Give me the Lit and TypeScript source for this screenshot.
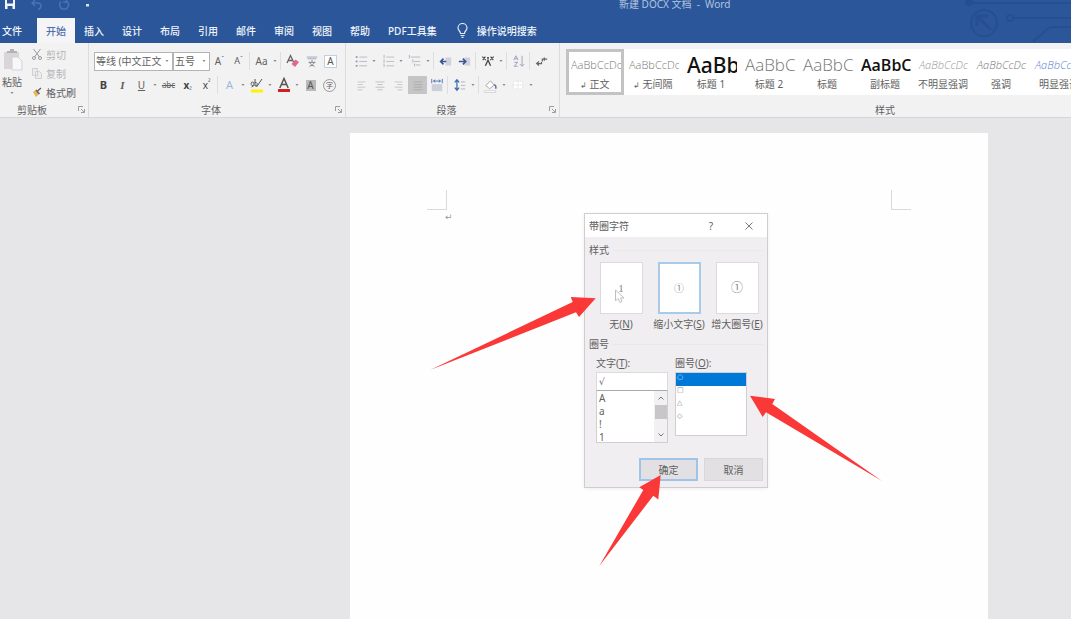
import { LitElement, html, svg, css, nothing, TemplateResult } from "lit";
import { customElement } from "lit/decorators.js";
import { classMap } from "lit/directives/class-map.js";

const lines = (rows: [number, number, number][], color: string) =>
  svg`${rows.map(([x, y, w]) => svg`<path d="M${x} ${y}h${w}" stroke=${color} fill="none"></path>`)}`;

const icon = (body: unknown, size = 16) =>
  html`<svg width=${size} height=${size} viewBox="0 0 16 16" aria-hidden="true">${body}</svg>`;

const caret = html`<svg class="caret" width="4" height="3" viewBox="0 0 4 3" aria-hidden="true"><path d="M.500 0h3L2 2z" fill="#888"></path></svg>`;

type Tool = { k: "tool" | "drop" | "sep"; label?: string; body?: unknown; on?: boolean };
const t = (label: string, body: unknown, on = false): Tool => ({ k: "tool", label, body, on });
const drop = (label: string): Tool => ({ k: "drop", label });
const sep: Tool = { k: "sep" };

const fontRowOne: Tool[] = [
  t("增大字号", html`<span class="g10">A</span><span class="tick">ˆ</span>`),
  t("减小字号", html`<span class="g9">A</span><span class="tick">ˇ</span>`),
  sep,
  t("更改大小写", html`<span class="g10">Aa</span>`),
  drop("更改大小写选项"),
  sep,
  t("清除所有格式", icon(svg`<path d="M2 10L5.500 2.500L9 10M3.300 7.500h4.500" stroke="#666" stroke-width="1.300" fill="none"></path><path d="M6.500 11l4-4.500 3.500 2.500-4 5z" fill="#e0688a"></path>`)),
  t("拼音指南", icon(svg`<path d="M2 3.500h12M3 5.500h10" stroke="#96a0b8"></path><path d="M8 7v2M4 9.500h8M10.500 10c-1 2-3 3.500-5.500 4M5.500 10c1 2 3 3.500 5.500 4" stroke="#777" fill="none"></path>`, 14)),
  t("字符边框", html`<span class="boxed">A</span>`),
];

const fontRowTwo: Tool[] = [
  t("加粗", html`<b class="g11">B</b>`),
  t("倾斜", html`<i class="g11 serif">I</i>`),
  t("下划线", html`<u class="g10">U</u>`),
  drop("下划线选项"),
  t("删除线", html`<s class="g8">abc</s>`),
  t("下标", html`<b class="g10">x</b><span class="low">₂</span>`),
  t("上标", html`<span class="g10 dark">x</span><span class="high">²</span>`),
  sep,
  t("文本效果", html`<span class="glow">A</span>`),
  drop("文本效果选项"),
  t("突出显示", icon(svg`<path d="M2 12.500h12v3H2z" fill="#fff200"></path><path d="M2.500 10c3-1 3-5 1-5s-2 4 1 4M6 2v7c3 0 3-4 0-3.500M7.500 10l5.500-8" stroke="#555" fill="none"></path>`)),
  drop("突出显示选项"),
  t("字体颜色", icon(svg`<path d="M2 12h12v3H2z" fill="#d21f1f"></path><path d="M3.800 11L8 1.500L12.200 11M5.300 7.500h5.400" stroke="#555" stroke-width="1.500" fill="none"></path>`)),
  drop("字体颜色选项"),
  t("字符底纹", html`<span class="shaded">A</span>`),
  t("带圈字符", html`<span class="ringed">字</span>`),
];

const bullets = (c: string) => svg`${lines([[6, 3.5, 9], [6, 8.5, 9], [6, 13.5, 9]], "#b5b5ba")}${[3.5, 8.5, 13.5].map((y) => svg`<path d=${`M2 ${y}h2`} stroke=${c} stroke-width="2"></path>`)}`;

const paraRowOne: Tool[] = [
  t("项目符号", icon(bullets("#8c93b5"), 14)),
  drop("项目符号选项"),
  t("编号", icon(svg`${lines([[6, 3.5, 9], [6, 8.5, 9], [6, 13.5, 9]], "#b8b8bc")}<path d="M3.500 1v14" stroke="#aab0c6" stroke-dasharray="4 1"></path>`, 14)),
  drop("编号选项"),
  t("多级列表", icon(svg`${lines([[3, 3.5, 11], [7, 8.5, 7], [9, 12.5, 5]], "#b2b2b8")}<path d="M1.500 1v4M5.500 6v4M7.500 11v3" stroke="#a3aac3"></path>`, 14)),
  drop("多级列表选项"),
  sep,
  t("减少缩进量", icon(svg`<path d="M8 3h7v10H8z" fill="#cfd2dc"></path><path d="M2 8h7M5.500 4.500L2 8l3.500 3.500" stroke="#35568f" stroke-width="2" fill="none"></path>`, 13)),
  t("增加缩进量", icon(svg`<path d="M8 3h7v10H8z" fill="#cfd2dc"></path><path d="M1 8h8M6 4.500L9.500 8 6 11.500" stroke="#35568f" stroke-width="2" fill="none"></path>`, 13)),
  sep,
  t("中文版式", icon(svg`<path d="M5 13.500L8 7l3 6.500" stroke="#4a4a4a" stroke-width="1.500" fill="none"></path><path d="M1.500 3l4 4M14.500 3l-4 4M2 7l3-4M14 7l-3-4" stroke="#4a4a4a" stroke-width="1.300"></path><path d="M7 3.500h2v2H7z" fill="#4a4a4a"></path>`, 14)),
  drop("中文版式选项"),
  sep,
  t("排序", icon(svg`<path d="M2 7l2.500-5L7 7M3 5.500h3M2.500 9.500h4L2.500 14h4" stroke="#9297bd" fill="none"></path><path d="M11.500 2v12M9 11.500l2.500 2.500 2.500-2.500" stroke="#9a9aa2" fill="none"></path>`, 14)),
  sep,
  t("显示编辑标记", icon(svg`<path d="M15 5H9v3M11.500 3v4M8 8.500v2H2M5 8L2 10.500 5 13" stroke="#666" stroke-width="1.500" fill="none"></path>`, 13)),
];

const paraRowTwo: Tool[] = [
  t("左对齐", icon(lines([[4, 4.5, 9], [4, 7.5, 6], [4, 10.5, 9], [4, 13.5, 6]], "#c4c4c7"), 14)),
  t("居中", icon(lines([[3, 4.5, 10], [5, 7.5, 6], [3, 10.5, 10], [5, 13.5, 6]], "#bcbcbf"), 14)),
  t("右对齐", icon(lines([[3, 4.5, 9], [6, 7.5, 6], [3, 10.5, 9], [6, 13.5, 6]], "#c4c4c7"), 14)),
  t("两端对齐", icon(lines([[3, 4.5, 10], [3, 7.5, 10], [3, 10.5, 10], [3, 13.5, 10]], "#acabac"), 14), true),
  t("分散对齐", icon(svg`<path d="M2 7h12v8H2z" fill="#cdd0d8"></path><path d="M2 1v5M14 1v5M4 3.500h8M6 2L4 3.500 6 5M10 2l2 1.500L10 5" stroke="#3a6bb0" fill="none"></path>`, 14)),
  sep,
  t("行距", icon(svg`<path d="M4.500 2v12M2 5l2.500-3L7 5M2 11l2.500 3L7 11" stroke="#3a6bb0" stroke-width="1.400" fill="none"></path>${lines([[9, 4.5, 5], [9, 8.5, 5], [9, 12.5, 5]], "#aeb0b6")}`, 14)),
  drop("行距选项"),
  sep,
  t("底纹", icon(svg`<path d="M3 8l5-5 4 4.500-5 4z" fill="#fff" stroke="#a2a2a6"></path><path d="M12 7c2 1 2 3 1.500 4.500" stroke="#62739c" stroke-width="1.500" fill="none"></path><path d="M1.500 13.500h12v2h-12z" fill="#fff" stroke="#d3d3d6"></path>`, 15)),
  drop("底纹选项"),
  t("边框", icon(svg`<path d="M2 3h12v10H2z" fill="#fff"></path><path d="M2.500 3.500h11v9h-11zM8 3v10M2 8h12" stroke="#d0d0d5" fill="none" stroke-dasharray="1 1"></path>`, 14)),
  drop("边框选项"),
];

const styleTiles: { sample: string; look: string; name: string; mark?: boolean }[] = [
  { sample: "AaBbCcDc", look: "body", name: "正文", mark: true },
  { sample: "AaBbCcDc", look: "body", name: "无间隔", mark: true },
  { sample: "AaBb", look: "h1", name: "标题 1" },
  { sample: "AaBbC", look: "h2", name: "标题 2" },
  { sample: "AaBbC", look: "h2", name: "标题" },
  { sample: "AaBbC", look: "sub", name: "副标题" },
  { sample: "AaBbCcDc", look: "em soft", name: "不明显强调" },
  { sample: "AaBbCcDc", look: "em", name: "强调" },
  { sample: "AaBbCcDc", look: "em blue", name: "明显强调" },
];

const fontStack = css`"Noto Sans", "Noto Sans CJK SC", sans-serif`;

@customElement("word-ribbon")
class WordRibbon extends LitElement {
  static styles = css`
    :host { display: block; font: 10px/14px ${fontStack}; color: #606060; }
    * { box-sizing: border-box; }
    button, select { font: inherit; color: inherit; border: 0; padding: 0; margin: 0; background: none; appearance: none; }
    button { display: flex; align-items: center; justify-content: center; }
    .title { display: grid; grid-template-columns: 619px 1fr; height: 18px; color: #b3c3df; position: relative; }
    .quick { display: flex; padding-left: 4px; gap: 15px; height: 11px; }
    .doc { font-size: 10px; line-height: 8px; white-space: nowrap; }
    .head { background: #2b579a; position: relative; }
    .circuit { position: absolute; right: 0; top: 0; }
    .tabs { display: flex; height: 25px; position: relative; color: #f1f5fb; }
    .tab { display: flex; align-items: center; padding: 0 9px; font-size: 10px; color: inherit; text-decoration: none; font-weight: 500; white-space: nowrap; }
    .tab:first-child { padding: 0 15px 0 2px; }
    .tab.on { background: #f5f4f6; color: #5070ad; }
    .tell { gap: 9px; margin-left: 2px; }
    .ribbon { display: flex; background: #f3f2f3; border-bottom: 1px solid #d6d5d7; overflow: hidden; }
    .group { display: flex; flex-direction: column; flex: none; position: relative; border-right: 1px solid #dcdbdd; }
    .group.clip { width: 89px; }
    .group.font { width: 257px; }
    .group.para { width: 214px; }
    .group.styles { border: 0; }
    .body { height: 59px; padding: 6px 0 0 5px; }
    .clip .body { display: flex; gap: 8px; padding: 2px 0 0 0; }
    .clip .foot span { padding-right: 12px; }
    .foot { display: flex; align-items: center; height: 15px; padding-right: 2px; }
    .foot span { flex: 1; text-align: center; }
    .launch { width: 10px; height: 10px; }
    .row { display: flex; align-items: center; height: 24px; }
    .tool { width: 19px; height: 18px; flex: none; }
    .tool.on { background: #c6c5c6; }
    .drop { width: 8px; height: 18px; flex: none; }
    .sep { width: 1px; height: 18px; background: #dedde0; margin: 0 2px 0 1px; }
    .combo { display: flex; align-items: center; height: 19px; background: #fff; border: 1px solid #b4b4b6; padding-right: 3px; }
    .combo select { flex: 1; min-width: 0; height: 17px; padding-left: 1px; white-space: nowrap; overflow: hidden; }
    .wide { width: 79px; }
    .narrow { width: 37px; }
    .paste { display: flex; flex-direction: column; width: 24px; padding-top: 3px; gap: 3px; justify-content: flex-start; }
    .stack { display: flex; flex-direction: column; }
    .mini { height: 19px; gap: 4px; justify-content: flex-start; }
    .mini.off { color: #b3b2b5; }
    .g8 { font-size: 8px; }
    .g9 { font-size: 9px; }
    .g10 { font-size: 10px; }
    .g11 { font-size: 11px; }
    b, .dark { color: #444; }
    .serif { font-family: "Liberation Serif", serif; font-weight: bold; }
    .tick, .low, .high { font-size: 7px; }
    .tick, .high { align-self: flex-start; }
    .low { align-self: flex-end; }
    .boxed { border: 1px solid #c5cde0; background: #fff; width: 13px; line-height: 11px; color: #555; }
    .shaded { background: #b9b9b9; width: 10px; line-height: 11px; color: #555; }
    .ringed { border: 1px solid #999; border-radius: 50%; width: 13px; height: 13px; font-size: 7px; line-height: 11px; }
    .glow { color: #9db8de; font-size: 11px; }
    .gallery { display: flex; background: #fff; height: 46px; }
    .styles .body { padding: 6px 124px 0 6px; }
    .tile { width: 58px; height: 46px; flex: none; flex-direction: column; border: 3px solid transparent; }
    .tile.on { border-color: #c3c3c3; }
    .sample { width: 52px; height: 24px; line-height: 24px; overflow: hidden; white-space: nowrap; text-align: left; padding-left: 2px; font-family: "Open Sans", sans-serif; font-weight: 300; color: #777; }
    .name { height: 14px; white-space: nowrap; }
    .body-s, .em { font-size: 11px; }
    .h1 { font-family: "Noto Sans", sans-serif; font-size: 21px; color: #111; font-weight: 500; }
    .h2 { font-size: 17px; }
    .sub { font-size: 16px; color: #111; font-weight: 600; }
    .em { font-style: italic; }
    .soft { color: #999; }
    .blue { color: #5a83cc; }
  `;

  private row(tools: Tool[], before: unknown = nothing) {
    return html`<div class="row">${before}${tools.map((x) =>
      x.k === "sep"
        ? html`<span class="sep"></span>`
        : x.k === "drop"
          ? html`<button class="drop" aria-label=${x.label}>${caret}</button>`
          : html`<button class=${classMap({ tool: true, on: !!x.on })} aria-label=${x.label}>${x.body}</button>`)}</div>`;
  }

  private group(kind: string, label: string, body: TemplateResult, launcher = true) {
    return html`<section class="group ${kind}">
      <div class="body">${body}</div>
      <div class="foot"><span>${label}</span>${launcher
        ? html`<button class="launch" aria-label="${label}设置"><svg width="7" height="7" viewBox="0 0 7 7"><path d="M.500 5V.500H5M3 3l3 3M6.500 3v3.500H3" stroke="#9d9da0" fill="none"></path></svg></button>`
        : nothing}</div>
    </section>`;
  }

  render() {
    const tabs = ["文件", "开始", "插入", "设计", "布局", "引用", "邮件", "审阅", "视图", "帮助", "PDF工具集"];
    return html`
      <header class="head">
        <svg class="circuit" width="110" height="43" viewBox="0 0 110 43" fill="none" stroke="#264f90" stroke-width="2" aria-hidden="true">
          <circle cx="8" cy="2" r="3" fill="#264f90"></circle><path d="M10 3h100M52 18h58M72 42l12-11q4-4 10-4h16"></path>
          <circle cx="49" cy="18" r="3"></circle><circle cx="23" cy="23" r="13"></circle><path d="M30 30L17 17M16 26V16h11" stroke-width="3"></path>
        </svg>
        <div class="title">
          <div class="quick">
            <button aria-label="保存"><svg width="12" height="11" viewBox="0 0 12 11"><path d="M1 0h10v9H1z" fill="#f2f6fc"></path><path d="M3 0h6v3.500H3zM3.500 6h5v3h-5z" fill="#2b579a"></path></svg></button>
            <button aria-label="撤消"><svg width="12" height="11" viewBox="0 0 12 11"><path d="M4 0L1 3l3 3M1 3h5q4 0 4 3t-3 3" stroke="#4a73b1" stroke-width="1.500" fill="none"></path></svg></button>
            <button aria-label="恢复"><svg width="12" height="11" viewBox="0 0 12 11"><path d="M8.500 1A4.500 4.500 0 1 1 3 1.500M8.500-2v4H5" stroke="#4a73b1" stroke-width="1.500" fill="none"></path></svg></button>
            <button aria-label="自定义快速访问工具栏"><svg width="6" height="11" viewBox="0 0 6 11"><path d="M1 4h3v2.500H1z" fill="#d7e2f3"></path></svg></button>
          </div>
          <div class="doc">新建 DOCX 文档 &nbsp;-&nbsp; Word</div>
        </div>
        <nav class="tabs">
          ${tabs.map((x, i) => html`<a href="#" class=${classMap({ tab: true, on: i === 1 })}>${x}</a>`)}
          <a href="#" class="tab tell"><svg width="11" height="15" viewBox="0 0 11 15" fill="none" stroke="#dfe9f7" stroke-width="1.200"><path d="M3.500 10.500C3.500 8 1 7.500 1 5a4.500 4.500 0 0 1 9 0c0 2.500-2.500 3-2.500 5.500zM3.500 12.500h4M4.500 14.300h2"></path></svg>操作说明搜索</a>
        </nav>
      </header>
      <div class="ribbon">
        ${this.group("clip", "剪贴板", html`
          <button class="paste"><svg width="22" height="24" viewBox="0 0 22 24"><path d="M3 4h15v17H3z" fill="#d9d6da"></path><path d="M6 5V3h3V1h4v2h3v2z" fill="#b4b2b6"></path><path d="M11 9h6l4 4v9H11z" fill="#f8f7f9" stroke="#d3d1d5"></path></svg><span>粘贴</span>${caret}</button>
          <div class="stack">
            <button class="mini off"><svg width="10" height="11" viewBox="0 0 10 11"><path d="M1.500 0L7.500 8M8.500 0L2.500 8" stroke="#9a9a9e" fill="none"></path><circle cx="2" cy="9" r="1.500" fill="none" stroke="#9a9a9e"></circle><circle cx="8" cy="9" r="1.500" fill="none" stroke="#9a9a9e"></circle></svg>剪切</button>
            <button class="mini off"><svg width="10" height="11" viewBox="0 0 10 11"><path d="M.500.500h5v7h-5zM3.500 3.500h4l2 2v5h-6z" fill="#ececee" stroke="#d0cfd2"></path></svg>复制</button>
            <button class="mini"><svg width="10" height="11" viewBox="0 0 10 11"><path d="M1 5l3-2 3 4-3 3z" fill="#e9b44c"></path><path d="M5 4.500L9 1M4 3l3.500 4" stroke="#66636a" stroke-width="1.500"></path></svg>格式刷</button>
          </div>`)}
        ${this.group("font", "字体", html`
          ${this.row(fontRowOne, html`
            <label class="combo wide"><select aria-label="字体"><option>等线 (中文正文</option></select>${caret}</label>
            <label class="combo narrow"><select aria-label="字号"><option>五号</option></select>${caret}</label>`)}
          ${this.row(fontRowTwo)}`)}
        ${this.group("para", "段落", html`${this.row(paraRowOne)}${this.row(paraRowTwo)}`)}
        ${this.group("styles", "样式", html`<div class="gallery">${styleTiles.map((s, i) => html`
          <button class=${classMap({ tile: true, on: i === 0 })}>
            <span class="sample ${s.look === "body" ? "body-s" : s.look}">${s.sample}</span>
            <span class="name">${s.mark ? html`<small class="g8">↲ </small>` : nothing}${s.name}</span>
          </button>`)}</div>`, false)}
      </div>`;
  }
}

@customElement("enclose-dialog")
class EncloseDialog extends LitElement {
  static styles = css`
    :host { display: block; width: 184px; border: 1px solid #cfcdd0; background: #f0eef0; font: 10px/14px ${fontStack}; color: #606060; box-sizing: border-box; box-shadow: 0 1px 4px #0001; }
    * { box-sizing: border-box; }
    button, input, select { font: inherit; color: inherit; margin: 0; padding: 0; border: 0; border-radius: 0; background: none; outline: 0; }
    .bar { display: flex; align-items: center; height: 23px; padding: 0 10px 0 4px; background: #fff; }
    .bar span { flex: 1; }
    .bar button { width: 16px; height: 16px; display: grid; place-items: center; }
    .bar button + button { margin-left: 22px; }
    .legend { display: flex; align-items: center; gap: 4px; margin: 6px 4px 0; height: 14px; }
    .legend::after { content: ""; flex: 1; height: 1px; background: #e9e7e9; }
    .choices { display: flex; padding: 5px 0 0 7px; }
    .choice { width: 58px; display: flex; flex-direction: column; align-items: center; gap: 3px; white-space: nowrap; }
    .choice input { appearance: none; width: 0; height: 0; position: absolute; }
    .card { width: 43px; height: 52px; background: #fff; border: 1px solid #dcdadd; display: grid; place-items: center; color: #888; position: relative; }
    .choice input:checked + .card { border: 2px solid #a9cbea; }
    .one { font: 11px/14px "Liberation Serif", serif; }
    .small { font-size: 10px; }
    .large { font-size: 12px; }
    .pointer { position: absolute; left: 13px; top: 26px; }
    .fields { display: flex; gap: 7px; padding: 5px 0 0 11px; }
    .field { width: 72px; display: flex; flex-direction: column; }
    .field label { margin-bottom: 2px; }
    .entry { width: 100%; height: 19px; padding-left: 2px; background: #fff; border: 1px solid #dcdadd; border-bottom-color: #aaa; font-family: "DejaVu Sans", sans-serif; font-size: 9px; }
    .list { display: flex; height: 52px; background: #fff; border: 1px solid #d0ced1; border-top: 0; }
    .list.tall { height: 64px; border: 1px solid #d0ced1; }
    select { flex: 1; min-width: 0; height: 100%; overflow: hidden; scrollbar-width: none; }
    option { height: 13px; min-height: 13px; line-height: 13px; padding: 0 0 0 2px; }
    .tall option { padding-left: 1px; font-family: "DejaVu Sans", sans-serif; font-size: 7px; color: #888; }
    .tall option:checked { background: #0078d7 linear-gradient(#0078d7, #0078d7); color: #cfe6fa; }
    .scroll { width: 13px; display: flex; flex-direction: column; align-items: center; background: #f1f0f2; padding: 5px 0 4px; }
    .thumb { width: 12px; height: 14px; background: #c8c6c9; margin: 5px 0 14px; }
    .actions { display: flex; justify-content: flex-end; gap: 6px; padding: 15px 4px 6px; }
    .actions button { width: 59px; height: 23px; background: #e2e0e3; border: 1px solid #d8d6d9; }
    .actions .ok { border: 2px solid #9fc4e8; }
  `;

  render() {
    const chev = (d: string) => html`<svg width="6" height="4" viewBox="0 0 6 4"><path d=${d} fill="none" stroke="#777"></path></svg>`;
    return html`
      <div class="bar"><span>带圈字符</span><button aria-label="帮助">?</button>
        <button aria-label="关闭"><svg width="8" height="8" viewBox="0 0 8 8"><path d="M.500.500l7 7M7.500.500l-7 7" stroke="#777"></path></svg></button></div>
      <div class="legend">样式</div>
      <div class="choices">
        <label class="choice"><input type="radio" name="mode"><span class="card"><span class="one">1</span>
          <svg class="pointer" width="12" height="15" viewBox="0 0 12 15"><path d="M1.500 1v11l2.500-2.500L6 13.500l2-1L6.500 9H10z" fill="#fff" stroke="#c0bec1"></path></svg></span><span>无(<u>N</u>)</span></label>
        <label class="choice"><input type="radio" name="mode" checked><span class="card"><span class="small">①</span></span><span>缩小文字(<u>S</u>)</span></label>
        <label class="choice"><input type="radio" name="mode"><span class="card"><span class="large">①</span></span><span>增大圈号(<u>E</u>)</span></label>
      </div>
      <div class="legend">圈号</div>
      <div class="fields">
        <div class="field"><label for="txt">文字(<u>T</u>):</label>
          <input class="entry" id="txt" value="√">
          <div class="list"><select size="4" aria-label="文字列表"><option>A</option><option>a</option><option>!</option><option>1</option></select>
            <span class="scroll">${chev("M.500 3.500L3 1l2.500 2.500")}<span class="thumb"></span>${chev("M.500.500L3 3 5.500.500")}</span></div>
        </div>
        <div class="field"><label for="ring">圈号(<u>O</u>):</label>
          <div class="list tall"><select id="ring" size="4"><option selected>○</option><option>□</option><option>△</option><option>◇</option></select></div>
        </div>
      </div>
      <div class="actions"><button class="ok">确定</button><button>取消</button></div>`;
  }
}

@customElement("app-root")
class AppRoot extends LitElement {
  static styles = css`
    :host { display: flex; flex-direction: column; height: 100vh; overflow: hidden; position: relative; background: #e6e6e9; }
    .desk { flex: 1; display: flex; padding: 15px 83px 0 350px; min-height: 0; }
    .page { flex: 1; background: #fefefe; padding: 57px 77px 0; }
    .corners { display: flex; justify-content: space-between; }
    .corner { width: 20px; height: 20px; box-sizing: border-box; border: 0 solid #dadada; border-bottom-width: 1px; }
    .corner.l { border-right-width: 1px; }
    .corner.r { border-left-width: 1px; }
    .mark { margin: 0 0 0 18px; font: 9px/14px "DejaVu Sans", sans-serif; color: #999; }
    .dialog { position: absolute; left: 584px; top: 213px; }
    .arrows { position: absolute; left: 0; top: 0; pointer-events: none; }
  `;

  render() {
    return html`
      <word-ribbon></word-ribbon>
      <main class="desk"><article class="page">
        <div class="corners"><span class="corner l"></span><span class="corner r"></span></div>
        <p class="mark">↵</p>
      </article></main>
      <enclose-dialog class="dialog" role="dialog" aria-label="带圈字符"></enclose-dialog>
      <svg class="arrows" width="900" height="600" viewBox="0 0 900 600" fill="#fb3838" aria-hidden="true">
        <path d="M430 370L572.700 302 570.700 297 595.700 298.300 579 317 576 312.300Z"></path>
        <path d="M882 481L772.300 404 775 399 750 395.700 762.700 417 766 412.300Z"></path>
        <path d="M599.300 566L643.300 490 639.300 487.300 660.700 475 658.300 499.500 653.300 495.700Z"></path>
      </svg>`;
  }
}
